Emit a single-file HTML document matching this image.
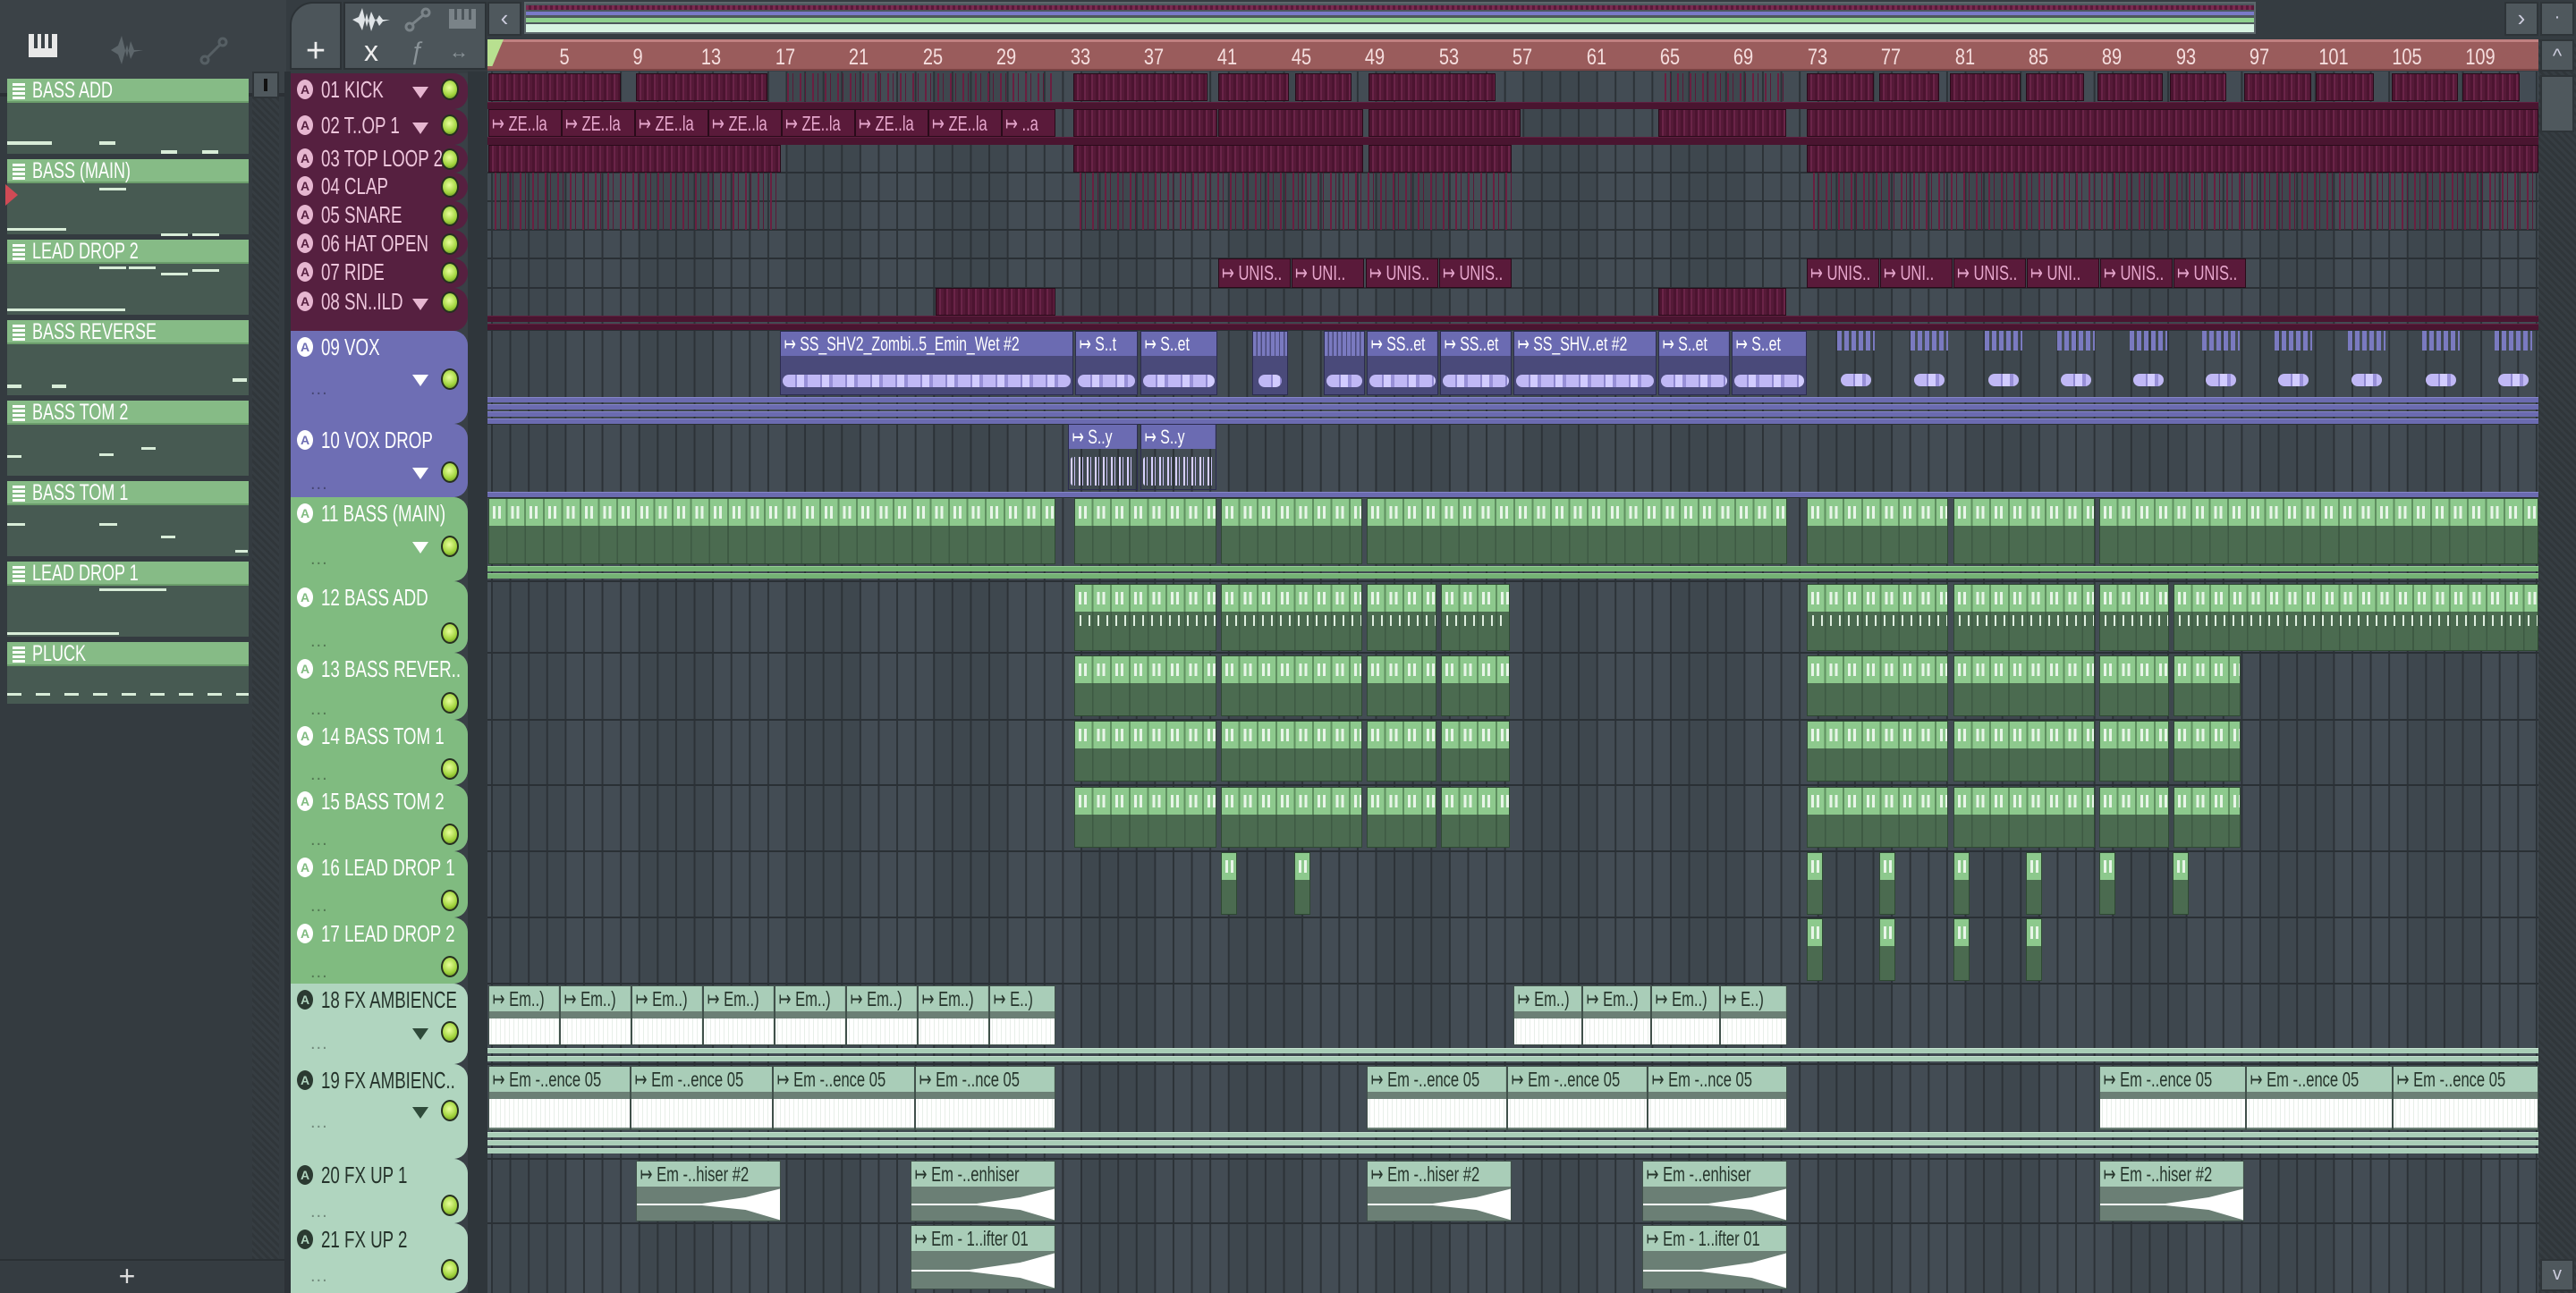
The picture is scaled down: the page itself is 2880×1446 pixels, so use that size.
<!DOCTYPE html>
<html><head><meta charset="utf-8"><style>
*{box-sizing:border-box;margin:0;padding:0}
body{width:2880px;height:1446px;overflow:hidden;background:#394046;font-family:"Liberation Sans",sans-serif;position:relative}
div,span{position:absolute}
.grid{left:545px;top:80px;width:2293px;height:1366px;background:
repeating-linear-gradient(90deg,#2c3237 0 2px,transparent 2px 20.6px) 4px 0/20.6px 100%,
repeating-linear-gradient(90deg,rgba(0,0,0,.07) 0 82.4px,transparent 82.4px 164.8px) 4px 0,
#434c54}
.hl{left:545px;width:2293px;height:2px;background:#2a3035}
.st{left:545px;width:2293px;height:6px}
.sm{background:#4a1530;border-top:1px solid #5f1f3f}
.sp{background:#6b6bb0;border-top:1px solid #8585c8}
.sg{background:#74b274;border-top:1px solid #94cc94}
.sn{background:#a9cdb7;border-top:1px solid #c6e2d0}
.m{background:repeating-linear-gradient(90deg,#4c1430 0 3px,#6a2448 3px 5px,#561a38 5px 8px);border:1px solid #2a0b1a}
.ln{background:repeating-linear-gradient(90deg,transparent 0 7px,#6a1f40 7px 9px,transparent 9px 13px,#5a1a38 13px 14px)}
.mc{background:#5a1a3a;border:1px solid #2a0b1a;overflow:hidden}
.mc span{left:3px;top:0;color:#e6a6cc;font-size:23px;line-height:30px;white-space:nowrap;transform:scaleX(.72);transform-origin:0 0}
.pc{background:#4a4a7a;border:1px solid #2c2c50;overflow:hidden}
.pc .t{left:0;width:139%;top:0;height:27px;background:#6b6bb2;color:#fff;font-size:22px;line-height:27px;padding-left:5px;white-space:nowrap;transform:scaleX(.72);transform-origin:0 0}
.pc .w{left:2px;right:2px;top:48px;height:14px;border-radius:7px;background:repeating-linear-gradient(90deg,#c0b8f5 0 14px,#8f88d0 14px 16px,#d2ccff 16px 24px,#9890d8 24px 28px)}
.gc{border:1px solid #2f4a33;background:repeating-linear-gradient(90deg,#4b6b50 0 19px,#3e5a43 19px 20.6px)}
.gc .t{left:0;right:0;top:0;height:30px;background:
repeating-linear-gradient(90deg,transparent 0 4px,#e8f5e8 4px 7px,transparent 7px 10px,#e8f5e8 10px 13px,transparent 13px 20.6px) 0 8px/100% 14px no-repeat,
repeating-linear-gradient(90deg,#8dc98d 0 18.6px,#5f8f60 18.6px 20.6px)}
.gc .n{left:0;right:0;top:34px;height:12px;background:repeating-linear-gradient(90deg,transparent 0 5px,#dfeedf 5px 7px,transparent 7px 10px)}
.ac{background:#6b7f75;border:1px solid #40504a;overflow:hidden}
.ac .t{left:0;width:139%;top:0;height:28px;background:#a9cdb8;color:#26352c;font-size:23px;line-height:28px;padding-left:5px;white-space:nowrap;transform:scaleX(.72);transform-origin:0 0}
.ac .w{left:0;right:0;top:36px;height:30px;background:repeating-linear-gradient(90deg,#fff 0 2px,#e8efe9 2px 3px,#fff 3px 5px)}
.h{left:325px;width:198px;border-radius:0 16px 16px 0}
.h .lb{left:34px;top:3px;font-size:26px;line-height:30px;white-space:nowrap;transform:scaleX(.72);transform-origin:0 0}
.h .a{left:7px;top:7px;width:18px;height:22px;border-radius:50%;font-size:14px;line-height:22px;text-align:center;font-weight:bold}
.hm{background:#562040;color:#eec6dc}.hm .a{background:#e6b6d0;color:#562040}
.hp{background:#6e6eb4;color:#fff}.hp .a{background:#fff;color:#6e6eb4}
.hg{background:#80bb80;color:#fff}.hg .a{background:#fff;color:#80bb80}
.hn{background:#b0d5bf;color:#25332b}.hn .a{background:#2b3a31;color:#b0d5bf}
.c{width:20px;height:24px;border-radius:50%;background:radial-gradient(circle at 45% 40%,#e8ff9a,#9ed23a 60%,#5a7a20);border:2px solid #263020;left:168px}
.tr{left:136px;width:0;height:0;border-left:9px solid transparent;border-right:9px solid transparent;border-top:13px solid #e6b6d0}
.d{left:22px;color:rgba(0,0,0,.35);font-size:20px;letter-spacing:1px}
.pt{left:8px;width:270px}
.pt .t{left:0;top:0;width:270px;height:27px;background:#86bb86;border-bottom:2px solid #6b9e6b}
.pt .t span{left:28px;top:0;color:#fff;font-size:25px;line-height:27px;white-space:nowrap;transform:scaleX(.72);transform-origin:0 0}
.pt .t:before{content:"";position:absolute;left:6px;top:5px;width:14px;height:18px;background:repeating-linear-gradient(#fff 0 3px,#86bb86 3px 5px)}
.pt .b{left:0;top:27px;width:270px;height:57px;background:#475a52}
.nl{height:4px;background:#d8ecd8}
.r{top:44px;left:545px;width:2293px;height:35px;background:#9a5c5c;border-top:3px solid #c08080;border-bottom:2px solid #7a4444}
.rn{top:2px;color:#f5dede;font-size:25px;line-height:30px;width:50px;margin-left:-25px;text-align:center;transform:scaleX(.8)}
.btn{background:#4f585d;border:2px solid #2e3438;color:#ccd;text-align:center}
</style></head><body>

<!-- left panel top toolbar -->
<div style="left:0;top:0;width:320px;height:108px;background:#3b4247;border-bottom:4px solid #2b3035"></div>
<div style="left:32px;top:38px;width:32px;height:26px;background:#e8e8e8"></div>
<div style="left:38px;top:38px;width:4px;height:16px;background:#3b4247"></div><div style="left:46px;top:38px;width:4px;height:16px;background:#3b4247"></div><div style="left:54px;top:38px;width:4px;height:16px;background:#3b4247"></div>
<svg style="position:absolute;left:122px;top:36px" width="40" height="40"><path d="M2 20 L10 15 L14 4 L20 28 L24 10 L28 20 L38 20 L28 22 L24 30 L20 14 L14 36 L10 25 Z" fill="#5d666b"/></svg>
<svg style="position:absolute;left:222px;top:40px" width="34" height="34"><circle cx="7" cy="27" r="4" fill="none" stroke="#565f64" stroke-width="3"/><circle cx="27" cy="7" r="4" fill="none" stroke="#565f64" stroke-width="3"/><line x1="10" y1="24" x2="24" y2="10" stroke="#565f64" stroke-width="3"/></svg>
<!-- pattern list -->
<div style="left:0;top:108px;width:320px;height:1300px;background:#343b40"></div>
<div style="left:282px;top:80px;width:30px;height:1328px;background:repeating-linear-gradient(45deg,#30363a 0 3px,#363d42 3px 6px)"></div>
<div class="btn" style="left:282px;top:80px;width:30px;height:30px"><div style="left:11px;top:6px;width:4px;height:14px;background:#111"></div></div>
<div class="pt" style="top:88px"><div class="t"><span>BASS ADD</span></div><div class="b"><div class="nl" style="left:0;top:43px;width:50px"></div><div class="nl" style="left:103px;top:43px;width:18px"></div><div class="nl" style="left:172px;top:53px;width:18px"></div><div class="nl" style="left:218px;top:53px;width:18px"></div></div></div>
<div class="pt" style="top:178px"><div class="t"><span>BASS (MAIN)</span></div><div class="b"><div class="nl" style="left:103px;top:5px;width:30px;height:3px"></div><div class="nl" style="left:0;top:50px;width:66px;height:3px"></div><div class="nl" style="left:172px;top:56px;width:30px;height:3px"></div><div class="nl" style="left:207px;top:56px;width:30px;height:3px"></div></div></div>
<div style="left:6px;top:206px;width:0;height:0;border-top:12px solid transparent;border-bottom:12px solid transparent;border-left:14px solid #d04a55"></div>
<div class="pt" style="top:268px"><div class="t"><span>LEAD DROP 2</span></div><div class="b"><div class="nl" style="left:103px;top:3px;width:30px;height:3px"></div><div class="nl" style="left:136px;top:3px;width:30px;height:3px"></div><div class="nl" style="left:172px;top:10px;width:30px;height:3px"></div><div class="nl" style="left:207px;top:6px;width:30px;height:3px"></div><div class="nl" style="left:0;top:50px;width:132px;height:3px"></div></div></div>
<div class="pt" style="top:358px"><div class="t"><span>BASS REVERSE</span></div><div class="b"><div class="nl" style="left:0;top:45px;width:16px"></div><div class="nl" style="left:50px;top:45px;width:16px"></div><div class="nl" style="left:252px;top:38px;width:16px"></div></div></div>
<div class="pt" style="top:448px"><div class="t"><span>BASS TOM 2</span></div><div class="b"><div class="nl" style="left:0;top:34px;width:16px;height:3px"></div><div class="nl" style="left:103px;top:32px;width:16px;height:3px"></div><div class="nl" style="left:150px;top:25px;width:16px;height:3px"></div></div></div>
<div class="pt" style="top:538px"><div class="t"><span>BASS TOM 1</span></div><div class="b"><div class="nl" style="left:0;top:20px;width:20px;height:3px"></div><div class="nl" style="left:103px;top:20px;width:20px;height:3px"></div><div class="nl" style="left:172px;top:34px;width:16px;height:3px"></div><div class="nl" style="left:255px;top:50px;width:14px;height:3px"></div></div></div>
<div class="pt" style="top:628px"><div class="t"><span>LEAD DROP 1</span></div><div class="b"><div class="nl" style="left:103px;top:3px;width:75px;height:3px"></div><div class="nl" style="left:0;top:52px;width:125px;height:3px"></div></div></div>
<div class="pt" style="top:718px"><div class="t"><span>PLUCK</span></div><div class="b" style="height:42px;background:repeating-linear-gradient(90deg,#d8ecd8 0 16px,transparent 16px 32px) 0 30px/100% 3px no-repeat,#475a52"></div></div>
<div style="left:0;top:1408px;width:320px;height:38px;background:#353c41;border-top:2px solid #2a3034;color:#ddd;font-size:32px;line-height:34px;text-align:center;padding-right:36px">+</div>

<!-- header toolbar -->
<div style="left:320px;top:0;width:225px;height:82px;background:#353c41"></div>
<div style="left:324px;top:2px;width:58px;height:76px;background:#4c555a;border-radius:26px 0 0 0;border:2px solid #2c3236;color:#eee;font-size:38px;line-height:38px;text-align:center;padding-top:34px">+</div>
<div style="left:384px;top:2px;width:160px;height:76px;background:#4c555a;border:2px solid #2c3236"></div>
<svg style="position:absolute;left:392px;top:6px" width="46" height="32"><path d="M2 16 L9 13 L13 3 L18 24 L23 7 L28 18 L32 11 L36 16 L44 16 L36 18 L32 23 L28 15 L23 29 L18 9 L13 28 L9 20 Z" fill="#dfe4e7"/></svg>
<svg style="position:absolute;left:452px;top:8px" width="30" height="28"><circle cx="6" cy="22" r="4" fill="none" stroke="#7a8388" stroke-width="3"/><circle cx="24" cy="6" r="4" fill="none" stroke="#7a8388" stroke-width="3"/><line x1="9" y1="19" x2="21" y2="9" stroke="#7a8388" stroke-width="3"/></svg>
<div style="left:502px;top:10px;width:30px;height:22px;background:#7a8388"></div>
<div style="left:508px;top:10px;width:3px;height:12px;background:#4c555a"></div><div style="left:516px;top:10px;width:3px;height:12px;background:#4c555a"></div><div style="left:524px;top:10px;width:3px;height:12px;background:#4c555a"></div>
<div style="left:407px;top:40px;color:#eee;font-size:32px;line-height:34px">x</div>
<div style="left:458px;top:42px;color:#8a9398;font-size:28px;font-style:italic;line-height:30px">ƒ</div>
<div style="left:502px;top:46px;color:#8a9398;font-size:22px;line-height:24px">↔</div>
<div style="left:523px;top:80px;width:22px;height:1366px;background:#2f363b"></div>
<div style="left:318px;top:80px;width:7px;height:1366px;background:#2c3237"></div>

<!-- top overview -->
<div style="left:545px;top:0;width:2335px;height:44px;background:#353c41"></div>
<div class="btn" style="left:545px;top:2px;width:38px;height:38px;font-size:26px;line-height:32px">‹</div>
<div style="left:586px;top:2px;width:1936px;height:36px;background:#4d575c;border:2px solid #5d676c"></div>
<div style="left:588px;top:6px;width:1932px;height:5px;background:repeating-linear-gradient(90deg,#7a2a50 0 3px,#5a1a3a 3px 6px)"></div>
<div style="left:588px;top:13px;width:1932px;height:4px;background:#7a7ac8"></div>
<div style="left:588px;top:20px;width:1932px;height:5px;background:#8fd08f"></div>
<div style="left:588px;top:27px;width:1932px;height:9px;background:#d7f3e2"></div>
<div class="btn" style="left:2800px;top:2px;width:38px;height:38px;font-size:26px;line-height:32px">›</div>
<div class="btn" style="left:2840px;top:2px;width:38px;height:38px;font-size:20px;line-height:30px">·</div>
<!-- right scrollbar -->
<div style="left:2838px;top:44px;width:42px;height:1402px;background:repeating-linear-gradient(45deg,#30363a 0 3px,#363d42 3px 6px)"></div>
<div class="btn" style="left:2840px;top:44px;width:38px;height:36px;font-size:22px;line-height:34px">^</div>
<div class="btn" style="left:2840px;top:84px;width:38px;height:64px"></div>
<div class="btn" style="left:2840px;top:1408px;width:38px;height:36px;font-size:20px;line-height:30px">v</div>

<!-- ruler -->
<div class="r">
<div style="left:0;top:-3px;width:18px;height:30px;background:#b8e090;clip-path:polygon(0 0,100% 0,30% 100%,0 100%)"></div>
<span class="rn" style="left:86px">5</span><span class="rn" style="left:168px">9</span><span class="rn" style="left:250px">13</span><span class="rn" style="left:333px">17</span><span class="rn" style="left:415px">21</span><span class="rn" style="left:498px">25</span><span class="rn" style="left:580px">29</span><span class="rn" style="left:663px">33</span><span class="rn" style="left:745px">37</span><span class="rn" style="left:827px">41</span><span class="rn" style="left:910px">45</span><span class="rn" style="left:992px">49</span><span class="rn" style="left:1075px">53</span><span class="rn" style="left:1157px">57</span><span class="rn" style="left:1240px">61</span><span class="rn" style="left:1322px">65</span><span class="rn" style="left:1404px">69</span><span class="rn" style="left:1487px">73</span><span class="rn" style="left:1569px">77</span><span class="rn" style="left:1652px">81</span><span class="rn" style="left:1734px">85</span><span class="rn" style="left:1816px">89</span><span class="rn" style="left:1899px">93</span><span class="rn" style="left:1981px">97</span><span class="rn" style="left:2064px">101</span><span class="rn" style="left:2146px">105</span><span class="rn" style="left:2228px">109</span>
</div>

<!-- grid -->
<div class="grid"></div>
<div class="hl" style="top:120px"></div><div class="hl" style="top:160px"></div><div class="hl" style="top:192px"></div><div class="hl" style="top:224px"></div><div class="hl" style="top:256px"></div><div class="hl" style="top:288px"></div><div class="hl" style="top:321px"></div><div class="hl" style="top:368px"></div><div class="hl" style="top:473px"></div><div class="hl" style="top:555px"></div><div class="hl" style="top:649px"></div><div class="hl" style="top:729px"></div><div class="hl" style="top:804px"></div><div class="hl" style="top:877px"></div><div class="hl" style="top:951px"></div><div class="hl" style="top:1025px"></div><div class="hl" style="top:1099px"></div><div class="hl" style="top:1189px"></div><div class="hl" style="top:1295px"></div><div class="hl" style="top:1367px"></div>

<!-- row strips -->
<div class="st sm" style="top:114px;height:8px"></div>
<div class="st sm" style="top:153px;height:9px"></div>
<div class="st sm" style="top:353px;height:7px"></div><div class="st sm" style="top:362px;height:7px"></div>
<div class="st sp" style="top:444px"></div><div class="st sp" style="top:452px"></div><div class="st sp" style="top:460px"></div><div class="st sp" style="top:468px"></div>
<div class="st sp" style="top:550px"></div>
<div class="st sg" style="top:633px"></div><div class="st sg" style="top:641px"></div>
<div class="st sn" style="top:1172px"></div><div class="st sn" style="top:1181px"></div>
<div class="st sn" style="top:1266px"></div><div class="st sn" style="top:1275px"></div><div class="st sn" style="top:1284px"></div>

<!-- 01 kick -->
<div class="m" style="left:546px;top:82px;width:148px;height:31px"></div>
<div class="m" style="left:711px;top:82px;width:147px;height:31px"></div>
<div class="ln" style="left:873px;top:82px;width:307px;height:31px"></div>
<div class="m" style="left:1200px;top:82px;width:150px;height:31px"></div>
<div class="m" style="left:1362px;top:82px;width:79px;height:31px"></div>
<div class="m" style="left:1448px;top:82px;width:63px;height:31px"></div>
<div class="m" style="left:1530px;top:82px;width:142px;height:31px"></div>
<div class="ln" style="left:1854px;top:82px;width:147px;height:31px"></div>
<div class="m" style="left:2020px;top:82px;width:75px;height:31px"></div><div class="m" style="left:2101px;top:82px;width:67px;height:31px"></div><div class="m" style="left:2180px;top:82px;width:79px;height:31px"></div><div class="m" style="left:2265px;top:82px;width:65px;height:31px"></div><div class="m" style="left:2345px;top:82px;width:73px;height:31px"></div><div class="m" style="left:2426px;top:82px;width:63px;height:31px"></div><div class="m" style="left:2509px;top:82px;width:75px;height:31px"></div><div class="m" style="left:2589px;top:82px;width:65px;height:31px"></div><div class="m" style="left:2674px;top:82px;width:74px;height:31px"></div><div class="m" style="left:2753px;top:82px;width:64px;height:31px"></div>

<!-- 02 -->
<div class="mc" style="left:546px;top:122px;width:82px;height:31px"><span>↦ ZE..la</span></div>
<div class="mc" style="left:628px;top:122px;width:82px;height:31px"><span>↦ ZE..la</span></div>
<div class="mc" style="left:710px;top:122px;width:82px;height:31px"><span>↦ ZE..la</span></div>
<div class="mc" style="left:792px;top:122px;width:82px;height:31px"><span>↦ ZE..la</span></div>
<div class="mc" style="left:874px;top:122px;width:82px;height:31px"><span>↦ ZE..la</span></div>
<div class="mc" style="left:956px;top:122px;width:82px;height:31px"><span>↦ ZE..la</span></div>
<div class="mc" style="left:1038px;top:122px;width:82px;height:31px"><span>↦ ZE..la</span></div>
<div class="mc" style="left:1120px;top:122px;width:60px;height:31px"><span>↦ ..a</span></div>
<div class="m" style="left:1200px;top:122px;width:161px;height:31px"></div>
<div class="m" style="left:1362px;top:122px;width:162px;height:31px"></div>
<div class="m" style="left:1530px;top:122px;width:170px;height:31px"></div>
<div class="m" style="left:1854px;top:122px;width:143px;height:31px"></div>
<div class="m" style="left:2020px;top:122px;width:818px;height:31px"></div>
<!-- 03 -->
<div class="m" style="left:546px;top:162px;width:327px;height:31px"></div>
<div class="m" style="left:1200px;top:162px;width:324px;height:31px"></div>
<div class="m" style="left:1530px;top:162px;width:160px;height:31px"></div>
<div class="m" style="left:2020px;top:162px;width:818px;height:31px"></div>
<!-- 04 05 -->
<div class="ln" style="left:546px;top:193px;width:327px;height:32px"></div>
<div class="ln" style="left:1200px;top:193px;width:490px;height:32px"></div>
<div class="ln" style="left:2020px;top:193px;width:818px;height:32px"></div>
<div class="ln" style="left:546px;top:225px;width:327px;height:32px"></div>
<div class="ln" style="left:1200px;top:225px;width:490px;height:32px"></div>
<div class="ln" style="left:2020px;top:225px;width:818px;height:32px"></div>
<!-- 06 -->
<div class="ln" style="left:711px;top:257px;width:162px;height:32px;background-size:6px 100%"></div>
<div class="ln" style="left:1362px;top:257px;width:328px;height:32px;background-size:6px 100%"></div>
<div class="ln" style="left:2020px;top:257px;width:818px;height:32px;background-size:6px 100%"></div>
<!-- 07 -->
<div class="mc" style="left:1362px;top:289px;width:81px;height:33px"><span>↦ UNIS..</span></div>
<div class="mc" style="left:1444px;top:289px;width:81px;height:33px"><span>↦ UNI..</span></div>
<div class="mc" style="left:1527px;top:289px;width:81px;height:33px"><span>↦ UNIS..</span></div>
<div class="mc" style="left:1609px;top:289px;width:81px;height:33px"><span>↦ UNIS..</span></div>
<div class="mc" style="left:2020px;top:289px;width:81px;height:33px"><span>↦ UNIS..</span></div>
<div class="mc" style="left:2102px;top:289px;width:81px;height:33px"><span>↦ UNI..</span></div>
<div class="mc" style="left:2184px;top:289px;width:81px;height:33px"><span>↦ UNIS..</span></div>
<div class="mc" style="left:2266px;top:289px;width:81px;height:33px"><span>↦ UNI..</span></div>
<div class="mc" style="left:2348px;top:289px;width:81px;height:33px"><span>↦ UNIS..</span></div>
<div class="mc" style="left:2430px;top:289px;width:81px;height:33px"><span>↦ UNIS..</span></div>
<!-- 08 -->
<div class="m" style="left:1046px;top:322px;width:134px;height:31px"></div>
<div class="m" style="left:1854px;top:322px;width:143px;height:31px"></div>

<!-- 09 vox -->
<div class="pc" style="left:872px;top:370px;width:328px;height:72px"><div class="t">↦ SS_SHV2_Zombi..5_Emin_Wet #2</div><div class="w"></div></div>
<div class="pc" style="left:1202px;top:370px;width:70px;height:72px"><div class="t">↦ S..t</div><div class="w"></div></div>
<div class="pc" style="left:1275px;top:370px;width:86px;height:72px"><div class="t">↦ S..et</div><div class="w"></div></div>
<div class="pc" style="left:1400px;top:370px;width:40px;height:72px"><div class="t" style="background:repeating-linear-gradient(90deg,#7a7ac0 0 5px,#4a4a7a 5px 7px)"></div><div class="w" style="left:6px;right:6px"></div></div>
<div class="pc" style="left:1480px;top:370px;width:46px;height:72px"><div class="t" style="background:repeating-linear-gradient(90deg,#7a7ac0 0 5px,#4a4a7a 5px 7px)"></div><div class="w"></div></div>
<div class="pc" style="left:1528px;top:370px;width:80px;height:72px"><div class="t">↦ SS..et</div><div class="w"></div></div>
<div class="pc" style="left:1610px;top:370px;width:80px;height:72px"><div class="t">↦ SS..et</div><div class="w"></div></div>
<div class="pc" style="left:1692px;top:370px;width:160px;height:72px"><div class="t">↦ SS_SHV..et #2</div><div class="w"></div></div>
<div class="pc" style="left:1854px;top:370px;width:80px;height:72px"><div class="t">↦ S..et</div><div class="w"></div></div>
<div class="pc" style="left:1936px;top:370px;width:84px;height:72px"><div class="t">↦ S..et</div><div class="w"></div></div>
<div class="pc" style="left:2054px;top:370px;width:42px;height:72px;background:transparent;border:0"><div class="t" style="height:22px;transform:none;width:100%;background:repeating-linear-gradient(90deg,#7a7ac0 0 5px,transparent 5px 8px)"></div><div class="w" style="left:4px;right:4px"></div></div>
<div class="pc" style="left:2136px;top:370px;width:42px;height:72px;background:transparent;border:0"><div class="t" style="height:22px;transform:none;width:100%;background:repeating-linear-gradient(90deg,#7a7ac0 0 5px,transparent 5px 8px)"></div><div class="w" style="left:4px;right:4px"></div></div>
<div class="pc" style="left:2219px;top:370px;width:42px;height:72px;background:transparent;border:0"><div class="t" style="height:22px;transform:none;width:100%;background:repeating-linear-gradient(90deg,#7a7ac0 0 5px,transparent 5px 8px)"></div><div class="w" style="left:4px;right:4px"></div></div>
<div class="pc" style="left:2300px;top:370px;width:42px;height:72px;background:transparent;border:0"><div class="t" style="height:22px;transform:none;width:100%;background:repeating-linear-gradient(90deg,#7a7ac0 0 5px,transparent 5px 8px)"></div><div class="w" style="left:4px;right:4px"></div></div>
<div class="pc" style="left:2381px;top:370px;width:42px;height:72px;background:transparent;border:0"><div class="t" style="height:22px;transform:none;width:100%;background:repeating-linear-gradient(90deg,#7a7ac0 0 5px,transparent 5px 8px)"></div><div class="w" style="left:4px;right:4px"></div></div>
<div class="pc" style="left:2462px;top:370px;width:42px;height:72px;background:transparent;border:0"><div class="t" style="height:22px;transform:none;width:100%;background:repeating-linear-gradient(90deg,#7a7ac0 0 5px,transparent 5px 8px)"></div><div class="w" style="left:4px;right:4px"></div></div>
<div class="pc" style="left:2543px;top:370px;width:42px;height:72px;background:transparent;border:0"><div class="t" style="height:22px;transform:none;width:100%;background:repeating-linear-gradient(90deg,#7a7ac0 0 5px,transparent 5px 8px)"></div><div class="w" style="left:4px;right:4px"></div></div>
<div class="pc" style="left:2625px;top:370px;width:42px;height:72px;background:transparent;border:0"><div class="t" style="height:22px;transform:none;width:100%;background:repeating-linear-gradient(90deg,#7a7ac0 0 5px,transparent 5px 8px)"></div><div class="w" style="left:4px;right:4px"></div></div>
<div class="pc" style="left:2708px;top:370px;width:42px;height:72px;background:transparent;border:0"><div class="t" style="height:22px;transform:none;width:100%;background:repeating-linear-gradient(90deg,#7a7ac0 0 5px,transparent 5px 8px)"></div><div class="w" style="left:4px;right:4px"></div></div>
<div class="pc" style="left:2789px;top:370px;width:42px;height:72px;background:transparent;border:0"><div class="t" style="height:22px;transform:none;width:100%;background:repeating-linear-gradient(90deg,#7a7ac0 0 5px,transparent 5px 8px)"></div><div class="w" style="left:4px;right:4px"></div></div>
<!-- 10 -->
<div class="pc" style="left:1194px;top:474px;width:78px;height:74px;background:transparent"><div class="t">↦ S..y</div><div class="w" style="top:36px;height:32px;border-radius:3px;background:repeating-linear-gradient(90deg,#d8d0ff 0 2px,transparent 2px 4px,#c8c0f5 4px 5px,transparent 5px 9px)"></div></div>
<div class="pc" style="left:1275px;top:474px;width:85px;height:74px;background:transparent"><div class="t">↦ S..y</div><div class="w" style="top:36px;height:32px;border-radius:3px;background:repeating-linear-gradient(90deg,#d8d0ff 0 2px,transparent 2px 4px,#c8c0f5 4px 5px,transparent 5px 9px)"></div></div>

<!-- 11 bass main -->
<div class="gc" style="left:546px;top:557px;width:634px;height:74px"><div class="t"></div></div>
<div class="gc" style="left:1201px;top:557px;width:159px;height:74px"><div class="t"></div></div>
<div class="gc" style="left:1365px;top:557px;width:158px;height:74px"><div class="t"></div></div>
<div class="gc" style="left:1528px;top:557px;width:470px;height:74px"><div class="t"></div></div>
<div class="gc" style="left:2020px;top:557px;width:158px;height:74px"><div class="t"></div></div>
<div class="gc" style="left:2184px;top:557px;width:158px;height:74px"><div class="t"></div></div>
<div class="gc" style="left:2347px;top:557px;width:491px;height:74px"><div class="t"></div></div>
<!-- 12 -->
<div class="gc" style="left:1201px;top:653px;width:159px;height:75px"><div class="t"></div><div class="n"></div></div>
<div class="gc" style="left:1365px;top:653px;width:158px;height:75px"><div class="t"></div><div class="n"></div></div>
<div class="gc" style="left:1528px;top:653px;width:78px;height:75px"><div class="t"></div><div class="n"></div></div>
<div class="gc" style="left:1611px;top:653px;width:77px;height:75px"><div class="t"></div><div class="n"></div></div>
<div class="gc" style="left:2020px;top:653px;width:158px;height:75px"><div class="t"></div><div class="n"></div></div>
<div class="gc" style="left:2184px;top:653px;width:158px;height:75px"><div class="t"></div><div class="n"></div></div>
<div class="gc" style="left:2347px;top:653px;width:78px;height:75px"><div class="t"></div><div class="n"></div></div>
<div class="gc" style="left:2430px;top:653px;width:408px;height:75px"><div class="t"></div><div class="n"></div></div>
<!-- 13 14 15 -->
<div class="gc" style="left:1201px;top:733px;width:159px;height:68px"><div class="t"></div></div><div class="gc" style="left:1365px;top:733px;width:158px;height:68px"><div class="t"></div></div><div class="gc" style="left:1528px;top:733px;width:78px;height:68px"><div class="t"></div></div><div class="gc" style="left:1611px;top:733px;width:77px;height:68px"><div class="t"></div></div><div class="gc" style="left:2020px;top:733px;width:158px;height:68px"><div class="t"></div></div><div class="gc" style="left:2184px;top:733px;width:158px;height:68px"><div class="t"></div></div><div class="gc" style="left:2347px;top:733px;width:78px;height:68px"><div class="t"></div></div><div class="gc" style="left:2430px;top:733px;width:75px;height:68px"><div class="t"></div></div>
<div class="gc" style="left:1201px;top:806px;width:159px;height:68px"><div class="t"></div></div><div class="gc" style="left:1365px;top:806px;width:158px;height:68px"><div class="t"></div></div><div class="gc" style="left:1528px;top:806px;width:78px;height:68px"><div class="t"></div></div><div class="gc" style="left:1611px;top:806px;width:77px;height:68px"><div class="t"></div></div><div class="gc" style="left:2020px;top:806px;width:158px;height:68px"><div class="t"></div></div><div class="gc" style="left:2184px;top:806px;width:158px;height:68px"><div class="t"></div></div><div class="gc" style="left:2347px;top:806px;width:78px;height:68px"><div class="t"></div></div><div class="gc" style="left:2430px;top:806px;width:75px;height:68px"><div class="t"></div></div>
<div class="gc" style="left:1201px;top:880px;width:159px;height:68px"><div class="t"></div></div><div class="gc" style="left:1365px;top:880px;width:158px;height:68px"><div class="t"></div></div><div class="gc" style="left:1528px;top:880px;width:78px;height:68px"><div class="t"></div></div><div class="gc" style="left:1611px;top:880px;width:77px;height:68px"><div class="t"></div></div><div class="gc" style="left:2020px;top:880px;width:158px;height:68px"><div class="t"></div></div><div class="gc" style="left:2184px;top:880px;width:158px;height:68px"><div class="t"></div></div><div class="gc" style="left:2347px;top:880px;width:78px;height:68px"><div class="t"></div></div><div class="gc" style="left:2430px;top:880px;width:75px;height:68px"><div class="t"></div></div>
<!-- 16 17 -->
<div class="gc" style="left:1365px;top:953px;width:18px;height:70px"><div class="t"></div></div><div class="gc" style="left:1447px;top:953px;width:18px;height:70px"><div class="t"></div></div>
<div class="gc" style="left:2020px;top:953px;width:18px;height:70px"><div class="t"></div></div><div class="gc" style="left:2101px;top:953px;width:18px;height:70px"><div class="t"></div></div><div class="gc" style="left:2184px;top:953px;width:18px;height:70px"><div class="t"></div></div><div class="gc" style="left:2265px;top:953px;width:18px;height:70px"><div class="t"></div></div><div class="gc" style="left:2347px;top:953px;width:18px;height:70px"><div class="t"></div></div><div class="gc" style="left:2429px;top:953px;width:18px;height:70px"><div class="t"></div></div>
<div class="gc" style="left:2020px;top:1027px;width:18px;height:70px"><div class="t"></div></div><div class="gc" style="left:2101px;top:1027px;width:18px;height:70px"><div class="t"></div></div><div class="gc" style="left:2184px;top:1027px;width:18px;height:70px"><div class="t"></div></div><div class="gc" style="left:2265px;top:1027px;width:18px;height:70px"><div class="t"></div></div>

<!-- 18 -->
<div class="ac" style="left:546px;top:1102px;width:80px;height:67px"><div class="t">↦ Em..)</div><div class="w"></div></div>
<div class="ac" style="left:626px;top:1102px;width:80px;height:67px"><div class="t">↦ Em..)</div><div class="w"></div></div>
<div class="ac" style="left:706px;top:1102px;width:80px;height:67px"><div class="t">↦ Em..)</div><div class="w"></div></div>
<div class="ac" style="left:786px;top:1102px;width:80px;height:67px"><div class="t">↦ Em..)</div><div class="w"></div></div>
<div class="ac" style="left:866px;top:1102px;width:80px;height:67px"><div class="t">↦ Em..)</div><div class="w"></div></div>
<div class="ac" style="left:946px;top:1102px;width:80px;height:67px"><div class="t">↦ Em..)</div><div class="w"></div></div>
<div class="ac" style="left:1026px;top:1102px;width:80px;height:67px"><div class="t">↦ Em..)</div><div class="w"></div></div>
<div class="ac" style="left:1106px;top:1102px;width:74px;height:67px"><div class="t">↦ E..)</div><div class="w"></div></div>
<div class="ac" style="left:1692px;top:1102px;width:77px;height:67px"><div class="t">↦ Em..)</div><div class="w"></div></div>
<div class="ac" style="left:1769px;top:1102px;width:77px;height:67px"><div class="t">↦ Em..)</div><div class="w"></div></div>
<div class="ac" style="left:1846px;top:1102px;width:77px;height:67px"><div class="t">↦ Em..)</div><div class="w"></div></div>
<div class="ac" style="left:1923px;top:1102px;width:75px;height:67px"><div class="t">↦ E..)</div><div class="w"></div></div>
<!-- 19 -->
<div class="ac" style="left:546px;top:1192px;width:159px;height:72px"><div class="t">↦ Em -..ence 05</div><div class="w" style="height:32px"></div></div>
<div class="ac" style="left:705px;top:1192px;width:159px;height:72px"><div class="t">↦ Em -..ence 05</div><div class="w" style="height:32px"></div></div>
<div class="ac" style="left:864px;top:1192px;width:159px;height:72px"><div class="t">↦ Em -..ence 05</div><div class="w" style="height:32px"></div></div>
<div class="ac" style="left:1023px;top:1192px;width:157px;height:72px"><div class="t">↦ Em -..nce 05</div><div class="w" style="height:32px"></div></div>
<div class="ac" style="left:1528px;top:1192px;width:157px;height:72px"><div class="t">↦ Em -..ence 05</div><div class="w" style="height:32px"></div></div>
<div class="ac" style="left:1685px;top:1192px;width:157px;height:72px"><div class="t">↦ Em -..ence 05</div><div class="w" style="height:32px"></div></div>
<div class="ac" style="left:1842px;top:1192px;width:156px;height:72px"><div class="t">↦ Em -..nce 05</div><div class="w" style="height:32px"></div></div>
<div class="ac" style="left:2347px;top:1192px;width:164px;height:72px"><div class="t">↦ Em -..ence 05</div><div class="w" style="height:32px"></div></div>
<div class="ac" style="left:2511px;top:1192px;width:164px;height:72px"><div class="t">↦ Em -..ence 05</div><div class="w" style="height:32px"></div></div>
<div class="ac" style="left:2675px;top:1192px;width:163px;height:72px"><div class="t">↦ Em -..ence 05</div><div class="w" style="height:32px"></div></div>
<!-- 20 -->
<div class="ac" style="left:711px;top:1298px;width:162px;height:68px"><div class="t">↦ Em -..hiser #2</div><svg style="position:absolute;left:0;top:28px" width="162" height="40" viewBox="0 0 100 40" preserveAspectRatio="none"><polygon points="0,19 45,19 75,12 100,2 100,38 75,26 45,21 0,21" fill="#fff"/></svg></div>
<div class="ac" style="left:1018px;top:1298px;width:162px;height:68px"><div class="t">↦ Em -..enhiser</div><svg style="position:absolute;left:0;top:28px" width="162" height="40" viewBox="0 0 100 40" preserveAspectRatio="none"><polygon points="0,19 45,19 75,12 100,2 100,38 75,26 45,21 0,21" fill="#fff"/></svg></div>
<div class="ac" style="left:1528px;top:1298px;width:162px;height:68px"><div class="t">↦ Em -..hiser #2</div><svg style="position:absolute;left:0;top:28px" width="162" height="40" viewBox="0 0 100 40" preserveAspectRatio="none"><polygon points="0,19 45,19 75,12 100,2 100,38 75,26 45,21 0,21" fill="#fff"/></svg></div>
<div class="ac" style="left:1836px;top:1298px;width:162px;height:68px"><div class="t">↦ Em -..enhiser</div><svg style="position:absolute;left:0;top:28px" width="162" height="40" viewBox="0 0 100 40" preserveAspectRatio="none"><polygon points="0,19 45,19 75,12 100,2 100,38 75,26 45,21 0,21" fill="#fff"/></svg></div>
<div class="ac" style="left:2347px;top:1298px;width:162px;height:68px"><div class="t">↦ Em -..hiser #2</div><svg style="position:absolute;left:0;top:28px" width="162" height="40" viewBox="0 0 100 40" preserveAspectRatio="none"><polygon points="0,19 45,19 75,12 100,2 100,38 75,26 45,21 0,21" fill="#fff"/></svg></div>
<!-- 21 -->
<div class="ac" style="left:1018px;top:1370px;width:162px;height:72px"><div class="t">↦ Em - 1..ifter 01</div><svg style="position:absolute;left:0;top:28px" width="162" height="44" viewBox="0 0 100 44" preserveAspectRatio="none"><polygon points="0,21 40,21 75,13 100,2 100,42 75,30 40,23 0,23" fill="#fff"/></svg></div>
<div class="ac" style="left:1836px;top:1370px;width:162px;height:72px"><div class="t">↦ Em - 1..ifter 01</div><svg style="position:absolute;left:0;top:28px" width="162" height="44" viewBox="0 0 100 44" preserveAspectRatio="none"><polygon points="0,21 40,21 75,13 100,2 100,42 75,30 40,23 0,23" fill="#fff"/></svg></div>

<!-- track headers -->
<div class="h hm" style="top:82px;height:40px"><span class="a">A</span><span class="lb">01 KICK</span><div class="tr" style="top:15px"></div><div class="c" style="top:6px"></div></div>
<div class="h hm" style="top:122px;height:40px"><span class="a">A</span><span class="lb">02 T..OP 1</span><div class="tr" style="top:15px"></div><div class="c" style="top:6px"></div></div>
<div class="h hm" style="top:162px;height:31px"><span class="a" style="top:4px">A</span><span class="lb" style="top:0">03 TOP LOOP 2</span><div class="c" style="top:4px"></div></div>
<div class="h hm" style="top:193px;height:32px"><span class="a" style="top:4px">A</span><span class="lb" style="top:0">04 CLAP</span><div class="c" style="top:4px"></div></div>
<div class="h hm" style="top:225px;height:32px"><span class="a" style="top:4px">A</span><span class="lb" style="top:0">05 SNARE</span><div class="c" style="top:4px"></div></div>
<div class="h hm" style="top:257px;height:32px"><span class="a" style="top:4px">A</span><span class="lb" style="top:0">06 HAT OPEN</span><div class="c" style="top:4px"></div></div>
<div class="h hm" style="top:289px;height:33px"><span class="a" style="top:4px">A</span><span class="lb" style="top:0">07 RIDE</span><div class="c" style="top:4px"></div></div>
<div class="h hm" style="top:322px;height:48px"><span class="a" style="top:4px">A</span><span class="lb" style="top:0">08 SN..ILD</span><div class="tr" style="top:12px"></div><div class="c" style="top:4px"></div></div>
<div class="h hp" style="top:370px;height:104px"><span class="a">A</span><span class="lb">09 VOX</span><div class="tr" style="top:49px;border-top-color:#fff"></div><div class="c" style="top:42px"></div><span class="d" style="top:54px">...</span></div>
<div class="h hp" style="top:474px;height:82px"><span class="a">A</span><span class="lb">10 VOX DROP</span><div class="tr" style="top:49px;border-top-color:#fff"></div><div class="c" style="top:42px"></div><span class="d" style="top:56px">...</span></div>
<div class="h hg" style="top:556px;height:94px"><span class="a">A</span><span class="lb">11 BASS (MAIN)</span><div class="tr" style="top:50px;border-top-color:#fff"></div><div class="c" style="top:43px"></div><span class="d" style="top:58px">...</span></div>
<div class="h hg" style="top:650px;height:80px"><span class="a">A</span><span class="lb">12 BASS ADD</span><div class="c" style="top:46px"></div><span class="d" style="top:56px">...</span></div>
<div class="h hg" style="top:730px;height:75px"><span class="a">A</span><span class="lb">13 BASS REVER..</span><div class="c" style="top:44px"></div><span class="d" style="top:52px">...</span></div>
<div class="h hg" style="top:805px;height:73px"><span class="a">A</span><span class="lb">14 BASS TOM 1</span><div class="c" style="top:43px"></div><span class="d" style="top:50px">...</span></div>
<div class="h hg" style="top:878px;height:74px"><span class="a">A</span><span class="lb">15 BASS TOM 2</span><div class="c" style="top:43px"></div><span class="d" style="top:50px">...</span></div>
<div class="h hg" style="top:952px;height:74px"><span class="a">A</span><span class="lb">16 LEAD DROP 1</span><div class="c" style="top:43px"></div><span class="d" style="top:50px">...</span></div>
<div class="h hg" style="top:1026px;height:74px"><span class="a">A</span><span class="lb">17 LEAD DROP 2</span><div class="c" style="top:43px"></div><span class="d" style="top:50px">...</span></div>
<div class="h hn" style="top:1100px;height:90px"><span class="a">A</span><span class="lb">18 FX AMBIENCE</span><div class="tr" style="top:50px;border-top-color:#2f4a3a"></div><div class="c" style="top:42px"></div><span class="d" style="top:56px">...</span></div>
<div class="h hn" style="top:1190px;height:106px"><span class="a">A</span><span class="lb">19 FX AMBIENC..</span><div class="tr" style="top:48px;border-top-color:#2f4a3a"></div><div class="c" style="top:40px"></div><span class="d" style="top:54px">...</span></div>
<div class="h hn" style="top:1296px;height:72px"><span class="a">A</span><span class="lb">20 FX UP 1</span><div class="c" style="top:40px"></div><span class="d" style="top:48px">...</span></div>
<div class="h hn" style="top:1368px;height:78px"><span class="a">A</span><span class="lb">21 FX UP 2</span><div class="c" style="top:40px"></div><span class="d" style="top:48px">...</span></div>
</body></html>
